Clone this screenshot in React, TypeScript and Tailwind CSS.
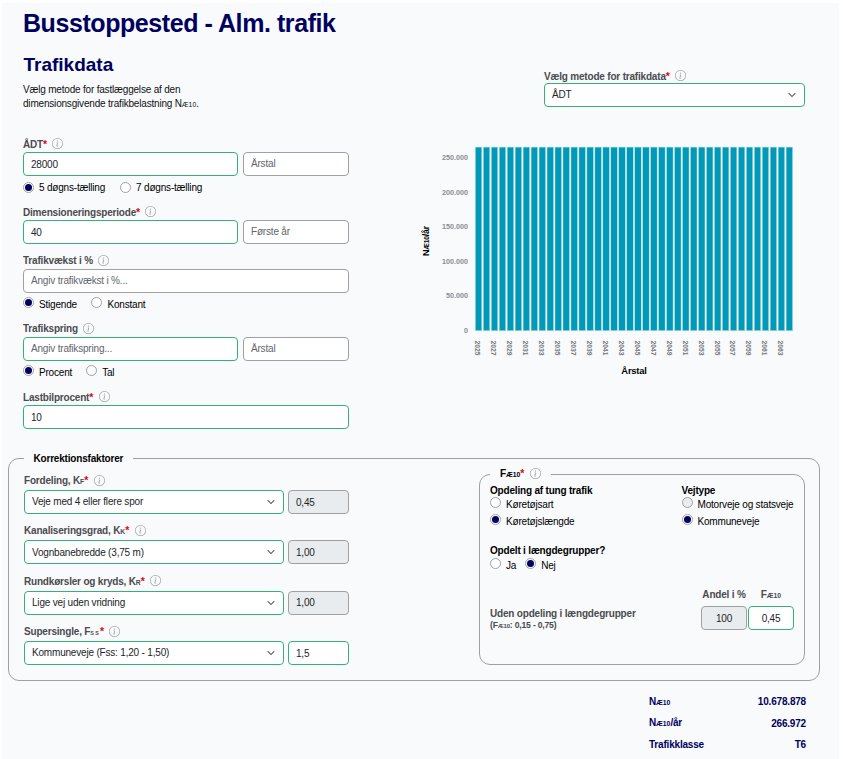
import type { ReactNode } from 'react';
import clsx from 'clsx';
import { BsChevronDown, BsInfoCircle } from 'react-icons/bs';

const Sub = ({ children }: { children: ReactNode }) => (
    <span className="text-[6.8px] tracking-normal">{children}</span>
);

type LabelProps = {
    children: ReactNode;
    required?: boolean;
};

const Label = ({ children, required }: LabelProps) => (
    <div className="flex h-4 items-center font-bold text-[#4b4b4f]">
        <span className="whitespace-nowrap pt-px">
            {children}
            {required && <span className="text-[10.5px] text-[#e8000d]">*</span>}
        </span>
        <BsInfoCircle className="mb-px ml-[5.5px] size-[11px] text-[#a3a3a6]" />
    </div>
);

type FieldProps = {
    value?: string;
    placeholder?: string;
    valid?: boolean;
    disabled?: boolean;
    className?: string;
};

const Field = ({ value, placeholder, valid, disabled, className }: FieldProps) => (
    <input
        readOnly
        value={value ?? ''}
        placeholder={placeholder}
        disabled={disabled}
        className={clsx(
            'h-6 min-w-0 rounded-[4px] border text-[#212529] placeholder:text-[#63666a]',
            valid ? 'border-[#35b078]' : 'border-[#a0a0a2]',
            disabled ? 'bg-[#e9ecef]' : 'bg-white',
            placeholder && 'pb-[2px]',
            className ?? 'px-[7px]',
        )}
    />
);

const SelectBox = ({ children }: { children: ReactNode }) => (
    <button type="button" className="flex h-6 w-full items-center justify-between rounded-[4px] border border-[#35b078] bg-white pl-[7px] pr-[8px] text-[#212529]">
        <span className="pt-px">{children}</span>
        <BsChevronDown className="size-[8px] stroke-[0.8] text-[#343a40]" />
    </button>
);

type RadioProps = {
    children: ReactNode;
    checked?: boolean;
    disabled?: boolean;
    level?: boolean;
};

const Radio = ({ children, checked, disabled, level }: RadioProps) => (
    <label className="flex h-3 items-center text-black">
        <span className={clsx('mb-px flex size-[11px] shrink-0 items-center justify-center rounded-full border border-[#a0a0a2]', disabled ? 'bg-[#e9ecef]' : 'bg-white')}>
            {checked && <span className="size-[7px] rounded-full bg-[#00005e]" />}
        </span>
        <span className={clsx('ml-[5px] whitespace-nowrap', level ? 'pt-px' : 'pt-[4px]')}>{children}</span>
    </label>
);

const years = Array.from({ length: 40 }, (_, i) => 2025 + i);
const ticks = [0, 50, 100, 150, 200, 250];

const Chart = () => (
    <svg width="390" height="245" viewBox="415 140 390 245" className="block font-bold tracking-normal">
        {ticks.map((t) => (
            <text key={t} x="468" y={332.8 - t * 0.6896} textAnchor="end" fontSize="7.2" fill="#8c8c90">
                {t === 0 ? '0' : `${t}.000`}
            </text>
        ))}
        {years.map((year, i) => (
            <rect key={year} x={475.3 + i * 7.97} y="147.1" width="6.5" height="183.6" fill="#0099b8" stroke="#b5e0e8" strokeWidth="0.5" />
        ))}
        {years.filter((_, i) => i % 2 === 0).map((year, i) => (
            <text key={year} transform={`translate(${475.4 + i * 15.94} 340.5) rotate(90)`} fontSize="6.8" fill="#77777b">
                {year}
            </text>
        ))}
        <text transform="translate(429 256) rotate(-90)" fontSize="9" fill="#000" letterSpacing="-0.2">
            N<tspan fontSize="6.6">Æ10</tspan>/år
        </text>
        <text x="634" y="374.3" textAnchor="middle" fontSize="9.4" fill="#000" letterSpacing="-0.2">Årstal</text>
    </svg>
);

type FactorProps = {
    label: ReactNode;
    option: string;
    value: string;
    editable?: boolean;
};

const Factor = ({ label, option, value, editable }: FactorProps) => (
    <div className="h-[50.4px]">
        <div className="mb-[1.5px]"><Label required>{label}</Label></div>
        <div className="grid grid-cols-[260px_61px] gap-1">
            <SelectBox>{option}</SelectBox>
            <Field value={value} valid={editable} disabled={!editable} />
        </div>
    </div>
);

const Result = ({ label, value }: { label: ReactNode; value: string }) => (
    <div className="flex h-[21.4px] items-center justify-between">
        <span>{label}</span>
        <span>{value}</span>
    </div>
);

const App = () => {
    return (
        <div className="h-[759px] w-[843px] overflow-hidden bg-white pl-[2px] pt-[3px] font-['Liberation_Sans',Arial,sans-serif] text-[10px] leading-[14.4px] tracking-[-0.19px]">
            <main className="h-full w-[837px] bg-[#f8fafc] pt-[5px]">
                <header className="flex h-[128px] justify-between pl-[21px] pr-[34px]">
                    <div>
                        <h1 className="text-[25px] font-bold leading-[31px] tracking-[-0.43px] text-[#00005e]">Busstoppested - Alm. trafik</h1>
                        <h2 className="mt-[14px] pl-[0.5px] text-[19px] font-bold leading-[24px] tracking-normal text-[#00005e]">Trafikdata</h2>
                        <p className="mt-[6px] w-[200px] whitespace-nowrap text-[#111]">
                            Vælg metode for fastlæggelse af den<br />
                            dimensionsgivende trafikbelastning N<Sub>Æ10</Sub>.
                        </p>
                    </div>
                    <div className="w-[261px] pt-[60px]">
                        <div className="mb-[-1px]"><Label required>Vælg metode for trafikdata</Label></div>
                        <SelectBox>ÅDT</SelectBox>
                    </div>
                </header>

                <section className="flex h-[314px] pl-[21px]">
                    <div className="w-[326px]">
                        <div className="h-[68px]">
                            <Label required>ÅDT</Label>
                            <div className="grid grid-cols-[215px_106px] gap-[5px]">
                                <Field value="28000" valid />
                                <Field placeholder="Årstal" />
                            </div>
                            <div className="mt-[6px] flex gap-[15px]">
                                <Radio checked level>5 døgns-tælling</Radio>
                                <Radio level>7 døgns-tælling</Radio>
                            </div>
                        </div>
                        <div className="h-[49px]">
                            <Label required>Dimensioneringsperiode</Label>
                            <div className="grid grid-cols-[215px_106px] gap-[5px]">
                                <Field value="40" valid />
                                <Field placeholder="Første år" />
                            </div>
                        </div>
                        <div className="h-[68px]">
                            <Label>Trafikvækst i %</Label>
                            <div className="grid">
                                <Field placeholder="Angiv trafikvækst i %..." />
                            </div>
                            <div className="mt-1 flex gap-[14.5px]">
                                <Radio checked>Stigende</Radio>
                                <Radio>Konstant</Radio>
                            </div>
                        </div>
                        <div className="h-[68px]">
                            <Label>Trafikspring</Label>
                            <div className="grid grid-cols-[215px_106px] gap-[5px]">
                                <Field placeholder="Angiv trafikspring..." valid />
                                <Field placeholder="Årstal" />
                            </div>
                            <div className="mt-1 flex gap-[14px]">
                                <Radio checked>Procent</Radio>
                                <Radio>Tal</Radio>
                            </div>
                        </div>
                        <Label required>Lastbilprocent</Label>
                        <div className="grid">
                            <Field value="10" valid />
                        </div>
                    </div>
                    <div className="ml-[66px] mt-1">
                        <Chart />
                    </div>
                </section>

                <fieldset className="ml-[6px] flex h-[231px] w-[812px] rounded-[11px] border border-[#a0a0a2] pl-[15px]">
                    <legend className="px-[9.5px] font-bold leading-[17px] text-black">Korrektionsfaktorer</legend>
                    <div className="w-[325px] pt-[5.5px]">
                        <Factor label={<>Fordeling, K<Sub>F</Sub></>} option="Veje med 4 eller flere spor" value="0,45" />
                        <Factor label={<>Kanaliseringsgrad, K<Sub>K</Sub></>} option="Vognbanebredde (3,75 m)" value="1,00" />
                        <Factor label={<>Rundkørsler og kryds, K<Sub>R</Sub></>} option="Lige vej uden vridning" value="1,00" />
                        <Factor label={<>Supersingle, F<span className="text-[5.4px] tracking-[1.3px]">SS</span></>} option="Kommuneveje (Fss: 1,20 - 1,50)" value="1,5" editable />
                    </div>

                    <fieldset className="ml-[130px] mt-[-1px] h-[199px] w-[325.5px] rounded-[11px] border border-[#a0a0a2] pl-[10px] pr-[10px]">
                        <legend className="px-[10px]">
                            <Label required><span className="text-black">F<Sub>Æ10</Sub></span></Label>
                        </legend>
                        <div className="flex gap-[87.5px]">
                            <div className="w-[104px]">
                                <h3 className="mb-[-1px] mt-[2px] font-bold text-black">Opdeling af tung trafik</h3>
                                <Radio>Køretøjsart</Radio>
                                <div className="mt-[5px]"><Radio checked>Køretøjslængde</Radio></div>
                            </div>
                            <div>
                                <h3 className="mb-[-1px] mt-[2px] font-bold text-black">Vejtype</h3>
                                <Radio disabled>Motorveje og statsveje</Radio>
                                <div className="mt-[5px]"><Radio checked>Kommuneveje</Radio></div>
                            </div>
                        </div>
                        <h3 className="mb-[-1px] mt-[18px] font-bold text-black">Opdelt i længdegrupper?</h3>
                        <div className="flex gap-[9px]">
                            <Radio>Ja</Radio>
                            <Radio checked>Nej</Radio>
                        </div>
                        <div className="mt-[18px] grid grid-cols-[210px_46px_46px] gap-x-[1px] font-bold text-[#4b4b4f]">
                            <span />
                            <span className="text-center">Andel i %</span>
                            <span className="text-center">F<Sub>Æ10</Sub></span>
                            <div className="pt-[6px] leading-[10.5px]">
                                Uden opdeling i længdegrupper
                                <div className="text-[8.6px]">(F<span className="text-[6px]">Æ10</span>: 0,15 - 0,75)</div>
                            </div>
                            <Field value="100" disabled className="mt-[3px] text-center font-normal" />
                            <Field value="0,45" valid className="mt-[3px] text-center font-normal" />
                        </div>
                    </fieldset>
                </fieldset>

                <footer className="ml-[647px] mt-[11px] w-[157px] font-bold text-[#00005e]">
                    <Result label={<>N<Sub>Æ10</Sub></>} value="10.678.878" />
                    <Result label={<>N<Sub>Æ10</Sub>/år</>} value="266.972" />
                    <Result label="Trafikklasse" value="T6" />
                </footer>
            </main>
        </div>
    );
};

export default App;
